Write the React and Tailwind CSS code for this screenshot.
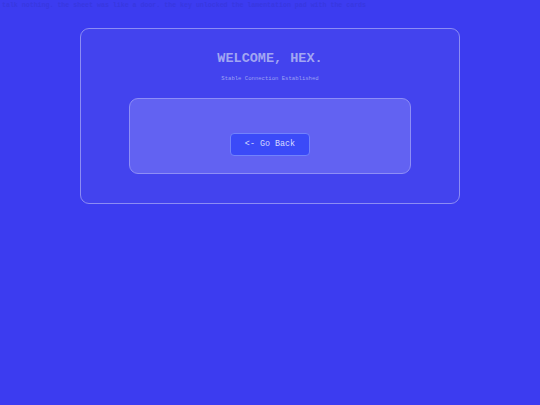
import React from 'react';

const mono = { fontFamily: '"Liberation Mono", "DejaVu Sans Mono", monospace' };

export default function App() {
  return (
    <div className="relative min-h-[405px] w-full bg-[#3c3cf0]" style={mono}>
      {/* faint background line */}
      <p className="absolute left-[2px] top-[3px] text-[6.6px] font-bold leading-none text-[#3838e0] whitespace-nowrap">
        talk nothing. the sheet was like a door. the key unlocked the lamentation pad with the cards
      </p>
      <div className="pt-[28px]">
        <div className="mx-auto w-[380px] h-[176px] rounded-[9px] border border-[#8c8cf4] bg-[#4343ee] flex flex-col items-center px-[48px] pt-[21px]">
          <h1 className="text-[13.5px] font-bold leading-[18px] text-[#a2a6f2]">WELCOME, HEX.</h1>
          <p className="mt-[7px] text-[5.6px] leading-[8px] text-[#9ca2f2]">Stable Connection Established</p>
          <div className="mt-[15px] w-full h-[76px] rounded-[9px] border border-[#8e8ef6] bg-[#6262f2] flex items-center justify-center">
            <button className="mt-[17px] h-[23px] w-[80px] rounded-[4px] border border-[#7282fb] bg-[#3b4af8] text-[8.4px] text-[#d8dcff]">
              &lt;- Go Back
            </button>
          </div>
        </div>
      </div>
    </div>
  );
}
